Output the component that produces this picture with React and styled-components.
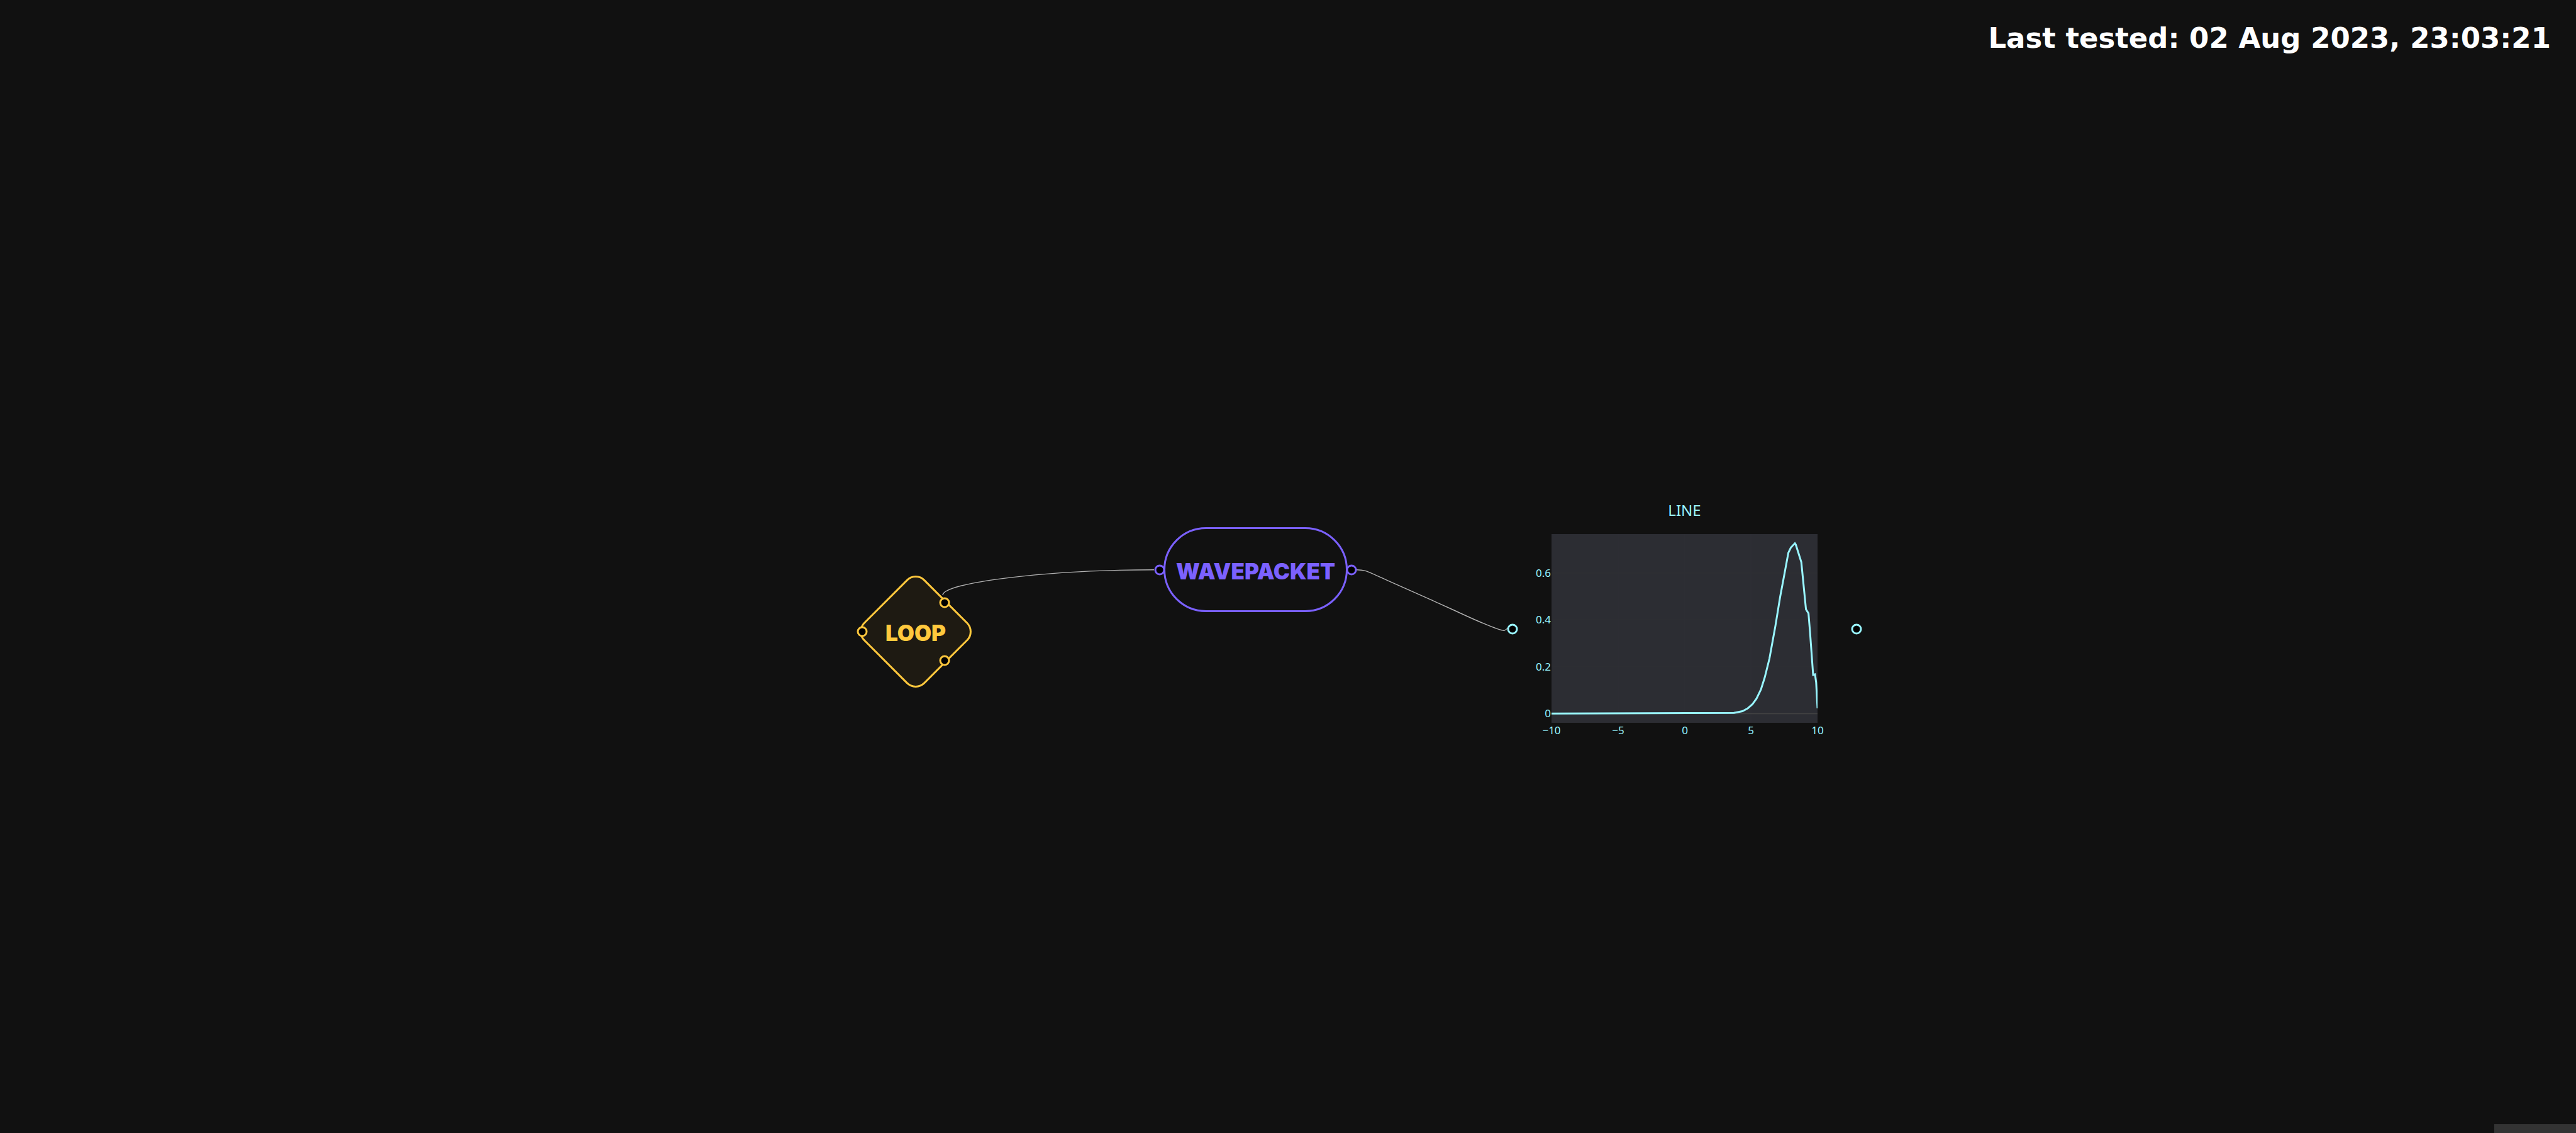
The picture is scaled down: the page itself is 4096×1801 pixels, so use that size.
import React from "react";
import styled, { createGlobalStyle } from "styled-components";

const GlobalStyle = createGlobalStyle`
  * { box-sizing: border-box; }
  body { margin: 0; background: #111; }
`;

const Canvas = styled.main`
  position: relative;
  min-height: 100vh;
  overflow: hidden;
  display: flex;
  flex-direction: column;
  justify-content: space-between;
  background: #111;
  font-family: "Noto Sans", "Open Sans", sans-serif;
`;

const Header = styled.header`
  display: flex;
  justify-content: flex-end;
  padding: 35px 40px;
`;

const Status = styled.h1`
  margin: 0;
  color: #fff;
  font: 700 45px/52px "DejaVu Sans", sans-serif;
`;

const EdgeLayer = styled.svg`
  position: absolute;
  inset: 0;
  width: 100%;
  height: 100%;
  fill: none;
  stroke: #b1b1b1;
  stroke-width: 1.4;
`;

const Node = styled.section`
  position: absolute;
  left: ${(p) => p.$x}px;
  top: ${(p) => p.$y}px;
  display: grid;
  place-items: center;
  color: ${(p) => p.$color};
`;

const LoopNode = styled(Node)`
  width: 178px;
  height: 178px;
`;

const Diamond = styled.div`
  grid-area: 1 / 1;
  width: 138px;
  height: 138px;
  border: 3px solid currentColor;
  border-radius: 21px;
  background: #1e1a12;
  transform: rotate(45deg);
`;

const PillNode = styled(Node)`
  width: 293px;
  height: 135px;
`;

const Pill = styled.div`
  grid-area: 1 / 1;
  width: 100%;
  height: 100%;
  border: 3px solid currentColor;
  border-radius: 68px;
`;

const Label = styled.h2`
  grid-area: 1 / 1;
  z-index: 1;
  margin: 0;
  padding-top: 4px;
  font-family: Inter, "Noto Sans", sans-serif;
  font-size: 35px;
  line-height: 46px;
  font-weight: 900;
`;

const Handle = styled.span`
  position: absolute;
  left: ${(p) => p.$left};
  top: ${(p) => p.$top};
  width: 17px;
  height: 17px;
  border: 3px solid currentColor;
  border-radius: 50%;
  background: #000;
  transform: translate(-50%, -50%);
`;

const ChartNode = styled(Node)`
  width: 547px;
  height: 417px;
  align-items: start;
`;

const ChartBody = styled.figure`
  margin: 0;
  display: flex;
  flex-direction: column;
`;

const ChartTitle = styled.figcaption`
  padding-bottom: 18px;
  text-align: center;
  font-size: 24px;
  line-height: 40px;
`;

const Plot = styled.svg`
  display: block;
  width: 423px;
  height: 300px;
  overflow: visible;
  text { font-size: 17px; fill: currentColor; }
`;

const Attribution = styled.footer`
  align-self: flex-end;
  width: 130px;
  height: 14px;
  background: #333;
`;

const xTicks = [["−10", 0], ["−5", 106], ["0", 212], ["5", 317], ["10", 423]];
const yTicks = [["0", 285], ["0.2", 211], ["0.4", 136], ["0.6", 62]];

// Samples of the wave packet, in plot coordinates.
const curve = [
  [0, 285.2], [290, 284.2], [303.5, 281.5], [312, 277], [319.5, 270.5], [326, 261.5],
  [333, 247], [339, 228], [346.5, 198], [356, 146], [363.5, 100], [371, 60],
  [376.6, 29.7], [380.5, 21.6], [387, 14.6], [388.5, 17], [397.2, 44.5],
  [404.6, 119.5], [408.6, 126], [411, 155], [416, 223.8], [419, 223], [420.8, 236], [423, 277],
];

function LineChart() {
  return (
    <ChartBody>
      <ChartTitle>LINE</ChartTitle>
      <Plot viewBox="0 0 423 300" role="img" aria-label="LINE">
        <clipPath id="plot-area"><rect width="423" height="300" /></clipPath>
        <rect width="423" height="300" fill="#2c2d33" />
        {xTicks.slice(1, 4).map(([t, x]) => (
          <path key={t} d={`M${x} 0V300`} stroke="#2e2f35" strokeWidth="1.4" />
        ))}
        {yTicks.slice(1).map(([t, y]) => (
          <path key={t} d={`M0 ${y}H423`} stroke="#2e2f35" strokeWidth="1.4" />
        ))}
        <path d="M0 285.5H423" stroke="#444" strokeWidth="1.5" />
        <polyline
          points={curve.map((p) => p.join(",")).join(" ")}
          fill="none"
          stroke="#99f5ff"
          strokeWidth="3"
          clipPath="url(#plot-area)"
        />
        {xTicks.map(([t, x]) => (
          <text key={t} x={x} y="318" textAnchor="middle">{t}</text>
        ))}
        {yTicks.map(([t, y]) => (
          <text key={t} x="-1" y={y + 6} textAnchor="end">{t}</text>
        ))}
      </Plot>
    </ChartBody>
  );
}

export default function App() {
  return (
    <Canvas>
      <GlobalStyle />
      <Header>
        <Status>Last tested: 02 Aug 2023, 23:03:21</Status>
      </Header>
      <EdgeLayer aria-hidden="true">
        <path d="M1499 946C1499 926 1667 905.7 1835 905.7" />
        <path d="M2157 905.7C2171 905.7 2172 907.5 2206.6 922.8L2277 954.2L2312 970Q2342 984 2359.4 991.2Q2385 1002 2391.6 1002.5Q2393 1002 2397 998.8" />
      </EdgeLayer>
      <LoopNode $x={1367} $y={915} $color="#ffc83d">
        <Diamond />
        <Label>LOOP</Label>
        <Handle $left="2%" $top="50%" />
        <Handle $left="76%" $top="24%" />
        <Handle $left="76%" $top="76%" />
      </LoopNode>
      <PillNode $x={1850} $y={838} $color="#7b61ff">
        <Handle $left="-2%" $top="50%" />
        <Handle $left="102%" $top="50%" />
        <Pill />
        <Label>WAVEPACKET</Label>
      </PillNode>
      <ChartNode $x={2405} $y={791} $color="#99f5ff">
        <LineChart />
        <Handle $left="0" $top="50%" />
        <Handle $left="100%" $top="50%" />
      </ChartNode>
      <Attribution />
    </Canvas>
  );
}
